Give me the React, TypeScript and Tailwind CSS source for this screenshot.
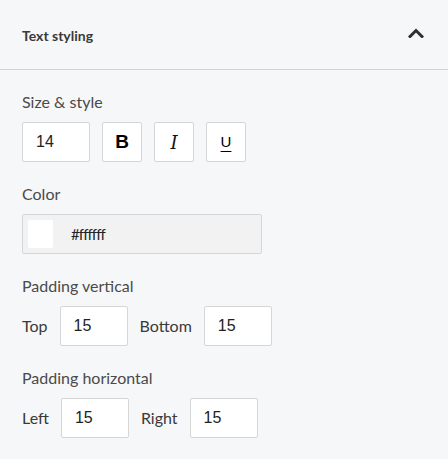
import React from 'react';

function NumberBox({ value }: { value: string }) {
  return (
    <div className="w-[68px] h-[40px] bg-white border border-[#d6d6d6] rounded-[2px] flex items-center pl-[13px] text-[16px] text-[#222] font-['Liberation_Sans',Arial,sans-serif]">
      {value}
    </div>
  );
}

function StyleButton({ children, className }: { children: React.ReactNode; className?: string }) {
  return (
    <div className={`w-[40px] h-[40px] bg-white border border-[#d6d6d6] rounded-[2px] flex items-center justify-center ${className ?? ''}`}>
      {children}
    </div>
  );
}

function Label({ children }: { children: React.ReactNode }) {
  return <div className="text-[16px] leading-[20px] text-[#4a4a4a] mb-[10px]">{children}</div>;
}

export default function App() {
  return (
    <div className="w-[448px] h-[459px] bg-[#f6f7f9] font-['Lato','Noto_Sans',sans-serif] overflow-hidden">
      <div className="h-[70px] border-b border-[#d2d2d2] flex items-center justify-between pl-[22px] pr-[24px]">
        <span className="text-[14px] font-bold text-[#3a3a3a] pt-[1px]">Text styling</span>
        <svg width="16" height="10" viewBox="0 0 16 10" className="mt-[-3px]">
          <polyline points="2,8.5 8,2.5 14,8.5" fill="none" stroke="#2f2f2f" strokeWidth="3" strokeLinecap="square" />
        </svg>
      </div>

      <div className="px-[22px] pt-[22px] flex flex-col gap-[22px]">
        <div>
          <Label>Size &amp; style</Label>
          <div className="flex gap-[12px]">
            <NumberBox value="14" />
            <StyleButton>
              <span className="text-[19px] font-bold text-black font-['Liberation_Sans',Arial,sans-serif]">B</span>
            </StyleButton>
            <StyleButton>
              <span className="text-[18px] italic font-light text-[#111] font-['DejaVu_Serif','Liberation_Serif',serif]">I</span>
            </StyleButton>
            <StyleButton>
              <span className="text-[15px] text-black underline underline-offset-[4px] font-['Liberation_Sans',Arial,sans-serif]">U</span>
            </StyleButton>
          </div>
        </div>

        <div>
          <Label>Color</Label>
          <div className="w-[240px] h-[40px] bg-[#f2f2f2] border border-[#d6d6d6] rounded-[2px] flex items-center pl-[5px]">
            <div className="w-[25px] h-[28px] bg-white rounded-[2px]" />
            <span className="ml-[18px] text-[15px] text-[#222] tracking-[-0.9px]">#ffffff</span>
          </div>
        </div>

        <div>
          <Label>Padding vertical</Label>
          <div className="flex items-center text-[16px] text-[#3a3a3a]">
            <span className="mr-[12px]">Top</span>
            <NumberBox value="15" />
            <span className="ml-[12px] mr-[12px]">Bottom</span>
            <NumberBox value="15" />
          </div>
        </div>

        <div>
          <Label>Padding horizontal</Label>
          <div className="flex items-center text-[16px] text-[#3a3a3a]">
            <span className="mr-[12px]">Left</span>
            <NumberBox value="15" />
            <span className="ml-[12px] mr-[12px]">Right</span>
            <NumberBox value="15" />
          </div>
        </div>
      </div>
    </div>
  );
}
